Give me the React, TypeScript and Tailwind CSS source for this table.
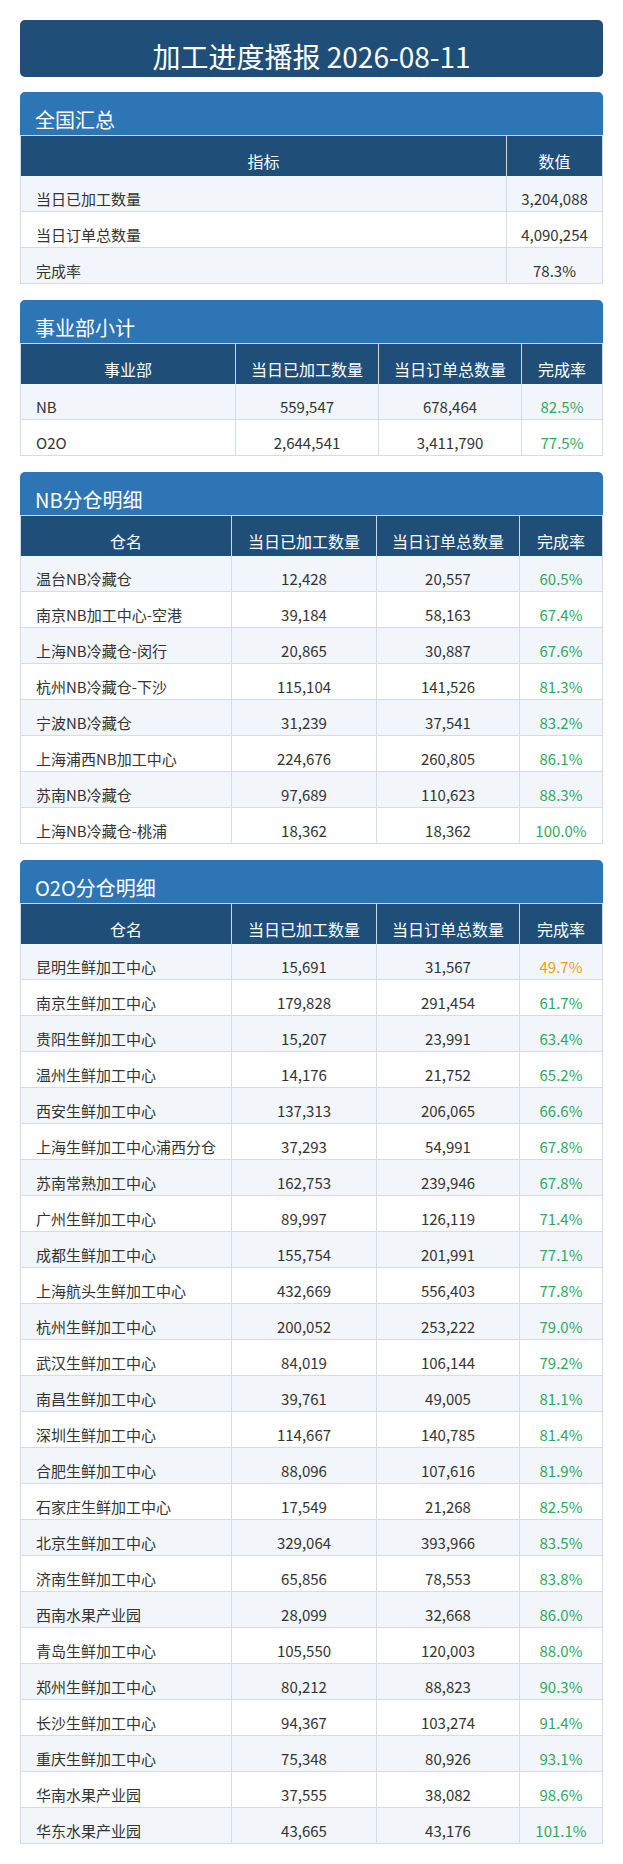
import React from "react";

type Row = string[];

const FONT = { fontFamily: '"Noto Sans CJK SC", "Noto Sans", sans-serif' };

function pctColor(v: string) {
  const n = parseFloat(v);
  return n < 50 ? "text-[#f39c12]" : "text-[#2eaa5e]";
}

function Section({
  title,
  headers,
  rows,
  cols,
  colorLast,
  leftFirst,
}: {
  title: string;
  headers: string[];
  rows: Row[];
  cols: string;
  colorLast: boolean;
  leftFirst: boolean;
}) {
  return (
    <div className="mb-[16px]">
      <div className="h-[44px] bg-[#2e75b6] rounded-t-[5px] border-b border-[#d0d7de] pl-[15px] pt-[12px] flex items-center text-white text-[20px] leading-[24px]">
        {title}
      </div>
      <div className={`grid ${cols}`}>
        {headers.map((h, i) => (
          <div
            key={i}
            className={`h-[40px] bg-[#1f4e79] text-white text-[16px] leading-[20px] border-r border-[#d0d7de] ${
              i === 0 ? "border-l" : ""
            } flex items-center justify-center pt-[10px]`}
          >
            {h}
          </div>
        ))}
      </div>
      {rows.map((r, ri) => (
        <div key={ri} className={`grid ${cols} ${ri % 2 === 0 ? "bg-[#f2f6fa]" : "bg-white"}`}>
          {r.map((c, ci) => {
            const last = ci === r.length - 1;
            const color = last && colorLast ? pctColor(c) : "text-[#333333]";
            const align = ci === 0 && leftFirst ? "justify-start pl-[15px]" : "justify-center";
            return (
              <div
                key={ci}
                className={`h-[36px] border-b border-r border-[#d5dce4] ${
                  ci === 0 ? "border-l" : ""
                } flex items-center ${align} pt-[10px] text-[15px] leading-[20px] ${color} whitespace-nowrap`}
              >
                {c}
              </div>
            );
          })}
        </div>
      ))}
    </div>
  );
}

const nbRows: Row[] = [
  ["温台NB冷藏仓", "12,428", "20,557", "60.5%"],
  ["南京NB加工中心-空港", "39,184", "58,163", "67.4%"],
  ["上海NB冷藏仓-闵行", "20,865", "30,887", "67.6%"],
  ["杭州NB冷藏仓-下沙", "115,104", "141,526", "81.3%"],
  ["宁波NB冷藏仓", "31,239", "37,541", "83.2%"],
  ["上海浦西NB加工中心", "224,676", "260,805", "86.1%"],
  ["苏南NB冷藏仓", "97,689", "110,623", "88.3%"],
  ["上海NB冷藏仓-桃浦", "18,362", "18,362", "100.0%"],
];

const o2oRows: Row[] = [
  ["昆明生鲜加工中心", "15,691", "31,567", "49.7%"],
  ["南京生鲜加工中心", "179,828", "291,454", "61.7%"],
  ["贵阳生鲜加工中心", "15,207", "23,991", "63.4%"],
  ["温州生鲜加工中心", "14,176", "21,752", "65.2%"],
  ["西安生鲜加工中心", "137,313", "206,065", "66.6%"],
  ["上海生鲜加工中心浦西分仓", "37,293", "54,991", "67.8%"],
  ["苏南常熟加工中心", "162,753", "239,946", "67.8%"],
  ["广州生鲜加工中心", "89,997", "126,119", "71.4%"],
  ["成都生鲜加工中心", "155,754", "201,991", "77.1%"],
  ["上海航头生鲜加工中心", "432,669", "556,403", "77.8%"],
  ["杭州生鲜加工中心", "200,052", "253,222", "79.0%"],
  ["武汉生鲜加工中心", "84,019", "106,144", "79.2%"],
  ["南昌生鲜加工中心", "39,761", "49,005", "81.1%"],
  ["深圳生鲜加工中心", "114,667", "140,785", "81.4%"],
  ["合肥生鲜加工中心", "88,096", "107,616", "81.9%"],
  ["石家庄生鲜加工中心", "17,549", "21,268", "82.5%"],
  ["北京生鲜加工中心", "329,064", "393,966", "83.5%"],
  ["济南生鲜加工中心", "65,856", "78,553", "83.8%"],
  ["西南水果产业园", "28,099", "32,668", "86.0%"],
  ["青岛生鲜加工中心", "105,550", "120,003", "88.0%"],
  ["郑州生鲜加工中心", "80,212", "88,823", "90.3%"],
  ["长沙生鲜加工中心", "94,367", "103,274", "91.4%"],
  ["重庆生鲜加工中心", "75,348", "80,926", "93.1%"],
  ["华南水果产业园", "37,555", "38,082", "98.6%"],
  ["华东水果产业园", "43,665", "43,176", "101.1%"],
];

export default function App() {
  return (
    <div className="bg-white w-[623px] px-[20px] pt-[20px] pb-[4px]" style={FONT}>
      <div className="h-[57px] mb-[15px] bg-[#1f4e79] rounded-[5px] flex items-center justify-center pt-[14px] text-white text-[28px] leading-[36px]">
        加工进度播报 2026-08-11
      </div>
      <Section
        title="全国汇总"
        headers={["指标", "数值"]}
        rows={[
          ["当日已加工数量", "3,204,088"],
          ["当日订单总数量", "4,090,254"],
          ["完成率", "78.3%"],
        ]}
        cols="grid-cols-[487px_1fr]"
        colorLast={false}
        leftFirst={true}
      />
      <Section
        title="事业部小计"
        headers={["事业部", "当日已加工数量", "当日订单总数量", "完成率"]}
        rows={[
          ["NB", "559,547", "678,464", "82.5%"],
          ["O2O", "2,644,541", "3,411,790", "77.5%"],
        ]}
        cols="grid-cols-[216px_143px_143px_1fr]"
        colorLast={true}
        leftFirst={true}
      />
      <Section
        title="NB分仓明细"
        headers={["仓名", "当日已加工数量", "当日订单总数量", "完成率"]}
        rows={nbRows}
        cols="grid-cols-[212px_145px_143px_1fr]"
        colorLast={true}
        leftFirst={true}
      />
      <Section
        title="O2O分仓明细"
        headers={["仓名", "当日已加工数量", "当日订单总数量", "完成率"]}
        rows={o2oRows}
        cols="grid-cols-[212px_145px_143px_1fr]"
        colorLast={true}
        leftFirst={true}
      />
    </div>
  );
}
